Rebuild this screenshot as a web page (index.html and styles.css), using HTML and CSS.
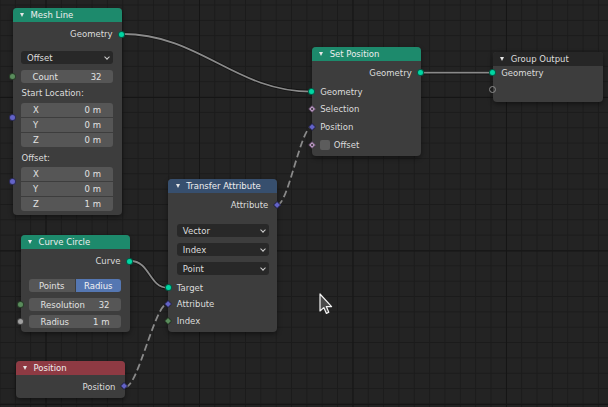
FILE: index.html
```html
<!DOCTYPE html>
<html>
<head>
<meta charset="utf-8">
<title>Geometry Nodes</title>
<link rel="stylesheet" href="styles.css">
</head>
<body>
<div class="editor">
  <svg class="links" width="608" height="407" viewBox="0 0 608 407">
    <g class="shade">
      <path d="M122.5,34 C200,34 235,91.7 311.7,91.7"/>
      <path d="M421.7,72.7 L492.7,72.7"/>
      <path d="M130.5,261 C150,261 149,287.7 167.7,287.7"/>
    </g>
    <g class="core">
      <path d="M122.5,34 C200,34 235,91.7 311.7,91.7"/>
      <path d="M421.7,72.7 L492.7,72.7"/>
      <path d="M130.5,261 C150,261 149,287.7 167.7,287.7"/>
    </g>
    <g class="core dash">
      <path d="M125.5,387 C138,387 155,303.5 167.7,303.5"/>
      <path d="M277.3,205 C288,205 301,126.7 311.7,126.7"/>
    </g>
  </svg>

  <div class="node mesh-line">
    <div class="hdr green"><span class="tri"></span>Mesh Line</div>
    <div class="body">
      <div class="row out">Geometry<i class="sock r geo"></i></div>
      <div class="prop gap9"><div class="select">Offset<span class="chev"></span></div></div>
      <div class="prop gap6"><div class="field"><span>Count</span><span>32</span></div><i class="sock l int"></i></div>
      <div class="label gap3">Start Location:</div>
      <div class="prop vec gap3">
        <div class="field"><span>X</span><span>0 m</span></div>
        <div class="field"><span>Y</span><span>0 m</span></div>
        <div class="field"><span>Z</span><span>0 m</span></div>
        <i class="sock l vecs vcol"></i>
      </div>
      <div class="label gap4">Offset:</div>
      <div class="prop vec gap2">
        <div class="field"><span>X</span><span>0 m</span></div>
        <div class="field"><span>Y</span><span>0 m</span></div>
        <div class="field"><span>Z</span><span>1 m</span></div>
        <i class="sock l vecs vcol"></i>
      </div>
    </div>
  </div>

  <div class="node curve-circle">
    <div class="hdr green"><span class="tri"></span>Curve Circle</div>
    <div class="body">
      <div class="row out">Curve<i class="sock r geo"></i></div>
      <div class="prop gap10">
        <div class="seg"><span>Points</span><span class="on">Radius</span></div>
      </div>
      <div class="prop gap6"><div class="field"><span>Resolution</span><span>32</span></div><i class="sock l int"></i></div>
      <div class="prop gap4"><div class="field"><span>Radius</span><span>1 m</span></div><i class="sock l flt"></i></div>
    </div>
  </div>

  <div class="node position">
    <div class="hdr red"><span class="tri"></span>Position</div>
    <div class="body">
      <div class="row out">Position<i class="sock r dia vcol"></i></div>
    </div>
  </div>

  <div class="node transfer">
    <div class="hdr blue"><span class="tri"></span>Transfer Attribute</div>
    <div class="body">
      <div class="row out">Attribute<i class="sock r dia vcol"></i></div>
      <div class="prop gap11"><div class="select">Vector<span class="chev"></span></div></div>
      <div class="prop gap6"><div class="select">Index<span class="chev"></span></div></div>
      <div class="prop gap6"><div class="select">Point<span class="chev"></span></div></div>
      <div class="inputs">
        <div class="row in">Target<i class="sock l geo"></i></div>
        <div class="row in">Attribute<i class="sock l dia vcol"></i></div>
        <div class="row in">Index<i class="sock l dia icol"></i></div>
      </div>
    </div>
  </div>

  <div class="node set-position">
    <div class="hdr green"><span class="tri"></span>Set Position</div>
    <div class="body">
      <div class="row out">Geometry<i class="sock r geo"></i></div>
      <div class="inputs">
        <div class="row in">Geometry<i class="sock l geo"></i></div>
        <div class="row in">Selection<i class="sock l dia bool dot"></i></div>
        <div class="row in">Position<i class="sock l dia vcol"></i></div>
        <div class="row in"><span class="check"></span>Offset<i class="sock l dia bool dot"></i></div>
      </div>
    </div>
  </div>

  <div class="node group-output">
    <div class="hdr dark"><span class="tri"></span>Group Output</div>
    <div class="body">
      <div class="row in first">Geometry<i class="sock l geo"></i></div>
      <div class="row in second"><i class="sock l empty"></i></div>
    </div>
  </div>

  <svg class="cursor" width="16" height="24" viewBox="0 0 16 24">
    <path d="M1,1 L1,18 L4.8,14.6 L7.4,20.4 L9.8,19.2 L7.3,13.6 L12.6,13.6 Z" fill="#4a4a4a" stroke="#f2f2f2" stroke-width="1.2" stroke-linejoin="round"/>
  </svg>
</div>
</body>
</html>
```

FILE: styles.css
```css
* { box-sizing: border-box; }

body {
  margin: 0;
  background: #232323;
}

.editor {
  position: relative;
  width: 608px;
  height: 407px;
  overflow: hidden;
  background-color: #232323;
  background-image:
    linear-gradient(to right, #151515 1px, transparent 1px),
    linear-gradient(to bottom, #151515 1px, transparent 1px),
    linear-gradient(to right, #1b1b1b 1px, transparent 1px),
    linear-gradient(to bottom, #1b1b1b 1px, transparent 1px);
  background-size: 153.5px 153.5px, 153.5px 153.5px, 15.35px 15.35px, 15.35px 15.35px;
  background-position: 45.5px 0, 0 97px, -0.5px 0, 0 4.5px;
  font-family: "DejaVu Sans", sans-serif;
  font-size: 8.5px;
  color: #dcdcdc;
}

.links {
  position: absolute;
  left: 0;
  top: 0;
}

.links path { fill: none; }
.links .shade path { stroke: rgba(0, 0, 0, 0.45); stroke-width: 3.4; }
.links .core path { stroke: #8a8a8a; stroke-width: 1.8; }
.links .dash path { stroke-dasharray: 7 3.5; }

/* node frame */
.node {
  position: absolute;
  width: 109px;
  background: #3d3d3d;
  border-radius: 4px;
  box-shadow: 0 2px 5px rgba(0, 0, 0, 0.45);
}

.hdr {
  height: 14px;
  display: flex;
  align-items: center;
  gap: 6.5px;
  padding-left: 7.5px;
  border-radius: 4px 4px 0 0;
  color: #eeeeee;
  white-space: nowrap;
}

.hdr.green { background: #1d8a6c; }
.hdr.red { background: #8e3a43; }
.hdr.blue { background: #374f6e; }
.hdr.dark { background: #262626; color: #dddddd; }

.tri {
  width: 0;
  height: 0;
  border-left: 2.5px solid transparent;
  border-right: 2.5px solid transparent;
  border-top: 4px solid #e6e6e6;
}

.body {
  padding-top: 4px;
  padding-bottom: 4px;
}

.row {
  position: relative;
  height: 16px;
  display: flex;
  align-items: center;
  padding: 0 9px;
  white-space: nowrap;
}

.row.out { justify-content: flex-end; }
.row.in { justify-content: flex-start; padding-left: 8.5px; }

.label {
  height: 14px;
  display: flex;
  align-items: center;
  padding-left: 9px;
}

.prop {
  position: relative;
  padding: 0 8.5px;
}

.gap2 { margin-top: 2px; }
.gap3 { margin-top: 3px; }
.gap4 { margin-top: 4px; }
.gap6 { margin-top: 6px; }
.gap9 { margin-top: 9px; }
.gap10 { margin-top: 10px; }
.gap11 { margin-top: 11px; }

.field {
  height: 13px;
  background: #565656;
  border-radius: 3px;
  display: flex;
  align-items: center;
  justify-content: space-between;
  padding: 0 11.5px;
  color: #e2e2e2;
}

.vec {
  display: flex;
  flex-direction: column;
  gap: 1px;
}

.vec .field {
  height: 14px;
  border-radius: 0;
  padding: 0 12px;
}

.vec .field:first-child { border-radius: 3px 3px 0 0; }
.vec .field:nth-child(3) { border-radius: 0 0 3px 3px; }

.select {
  height: 13px;
  background: #282828;
  border-radius: 3px;
  display: flex;
  align-items: center;
  justify-content: space-between;
  padding: 0 4px 0 6px;
  color: #dedede;
}

.chev {
  width: 4px;
  height: 4px;
  border-right: 1px solid #cfcfcf;
  border-bottom: 1px solid #cfcfcf;
  transform: rotate(45deg);
  margin-top: -2px;
}

.seg {
  height: 13px;
  display: flex;
  border-radius: 3px;
  overflow: hidden;
  gap: 1px;
  background: #3d3d3d;
}

.seg span {
  flex: 1;
  display: flex;
  align-items: center;
  justify-content: center;
  background: #565656;
  color: #e2e2e2;
}

.seg span.on { background: #5577b2; color: #f2f2f2; }

/* sockets */
.sock {
  position: absolute;
  top: 50%;
  width: 7px;
  height: 7px;
  margin-top: -3.5px;
  border-radius: 50%;
  border: 0.6px solid rgba(0, 0, 0, 0.55);
}

.sock.l { left: -3.5px; }
.sock.r { right: -3.5px; }

.sock.vecs { top: 14.5px; }

.geo { background: #00d6a3; }
.int { background: #5a8c5c; }
.flt { background: #a1a1a1; }
.vcol { background: #6363c7; }
.icol { background: #5a8c5c; }
.bool { background: #cca6d6; }

.sock.dia {
  width: 6.2px;
  height: 6.2px;
  margin-top: -3.1px;
  border-radius: 1px;
  transform: rotate(45deg);
}

.sock.dia.l { left: -3.1px; }
.sock.dia.r { right: -3.1px; }

.dot::after {
  content: "";
  position: absolute;
  left: 50%;
  top: 50%;
  width: 2.4px;
  height: 2.4px;
  margin: -1.2px 0 0 -1.2px;
  background: #3a3a3a;
}

.sock.empty {
  background: transparent;
  border: 1px solid #8c8c8c;
}

.check {
  width: 10px;
  height: 10px;
  background: #5c5c5c;
  border-radius: 2px;
  margin-right: 3.5px;
}

/* placement of nodes on the canvas */
.mesh-line { left: 12.5px; top: 8px; }
.curve-circle { left: 20.5px; top: 235px; }
.position { left: 15.5px; top: 360.5px; }
.position .body { padding-bottom: 3px; }

.transfer { left: 168.3px; top: 179px; }
.transfer .inputs { margin-top: 4.5px; }
.transfer .row.in { height: 16.5px; }
.transfer .body { padding-bottom: 3px; }

.set-position { left: 311.7px; top: 46.5px; }
.set-position .inputs { margin-top: 2.3px; }
.set-position .row.in { height: 17.75px; }
.set-position .body { padding-bottom: 2.2px; }

.group-output { left: 492.7px; top: 51.7px; width: 110.5px; }
.group-output .body { padding-top: 0; padding-bottom: 2px; }
.group-output .row.first { height: 14px; }
.group-output .row.second { height: 20px; }

.cursor {
  position: absolute;
  left: 318.5px;
  top: 293px;
}
```
